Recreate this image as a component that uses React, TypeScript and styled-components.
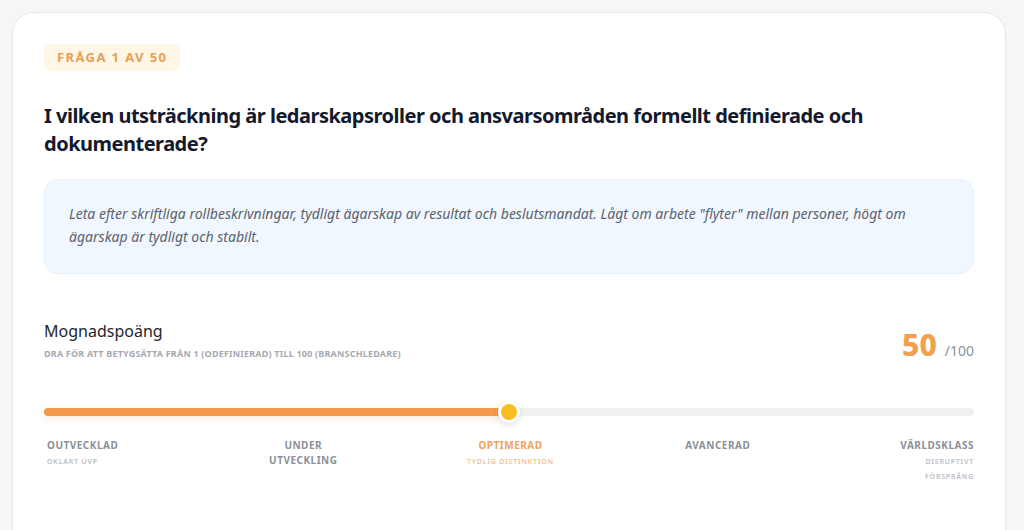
import React, { useState } from 'react';
import styled, { createGlobalStyle } from 'styled-components';

const GlobalStyle = createGlobalStyle`
  html, body {
    margin: 0;
    padding: 0;
    background: #f6f6f7;
    font-family: 'Noto Sans', 'Open Sans', sans-serif;
    -webkit-font-smoothing: antialiased;
  }
`;

const levels = [
  { title: 'Outvecklad', sub: 'Oklart UVP' },
  { title: 'Under utveckling', sub: '' },
  { title: 'Optimerad', sub: 'Tydlig distinktion' },
  { title: 'Avancerad', sub: '' },
  { title: 'Världsklass', sub: 'Disruptivt försprång' },
];

const App: React.FC = () => {
  const [score] = useState(50);
  const active = Math.min(levels.length - 1, Math.floor(score / 20));

  return (
    <>
      <GlobalStyle />
      <Page>
        <Card>
          <Badge>Fråga 1 av 50</Badge>
          <Question>
            I vilken utsträckning är ledarskapsroller och ansvarsområden formellt definierade och
            dokumenterade?
          </Question>

          <Hint>
            Leta efter skriftliga rollbeskrivningar, tydligt ägarskap av resultat och beslutsmandat.
            Lågt om arbete "flyter" mellan personer, högt om ägarskap är tydligt och stabilt.
          </Hint>

          <ScoreHeader>
            <div>
              <ScoreTitle>Mognadspoäng</ScoreTitle>
              <ScoreHelp>Dra för att betygsätta från 1 (odefinierad) till 100 (branschledare)</ScoreHelp>
            </div>
            <ScoreValue>
              <strong>{score}</strong>
              <span>/100</span>
            </ScoreValue>
          </ScoreHeader>

          <Track>
            <Fill style={{ width: `${score}%` }} />
            <Thumb style={{ left: `${score}%` }} />
          </Track>

          <Levels>
            {levels.map((level, i) => (
              <Level key={level.title} index={i}>
                <LevelTitle active={i === active}>{level.title}</LevelTitle>
                {level.sub && <LevelSub active={i === active}>{level.sub}</LevelSub>}
              </Level>
            ))}
          </Levels>
        </Card>
      </Page>
    </>
  );
};

const Page = styled.div`
  padding: 12px 18px 0 12px;
  height: 530px;
  box-sizing: border-box;
  overflow: hidden;
`;

const Card = styled.div`
  background: #ffffff;
  border: 1px solid #e7e7ea;
  border-radius: 22px;
  padding: 31px 31px 60px;
  min-height: 600px;
  box-sizing: border-box;
`;

const Badge = styled.div`
  display: inline-block;
  background: #fff6e5;
  color: #e7a056;
  font-size: 13px;
  font-weight: 700;
  letter-spacing: 1.4px;
  text-transform: uppercase;
  padding: 5px 13px;
  border-radius: 6px;
  line-height: 17px;
`;

const Question = styled.h1`
  margin: 31px 0 0;
  font-size: 20px;
  font-weight: 700;
  line-height: 28px;
  color: #141a2b;
  letter-spacing: -0.5px;
`;

const Hint = styled.div`
  margin-top: 21px;
  background: #f0f7fe;
  border: 1px solid #e6f0fa;
  border-radius: 14px;
  padding: 22px 24px 25px;
  font-size: 14px;
  font-style: italic;
  line-height: 23px;
  color: #5b6270;
`;

const ScoreHeader = styled.div`
  margin-top: 46px;
  display: flex;
  justify-content: space-between;
  align-items: flex-end;
`;

const ScoreTitle = styled.div`
  font-size: 16px;
  color: #22252c;
  line-height: 22px;
`;

const ScoreHelp = styled.div`
  margin-top: 5px;
  font-size: 9px;
  font-weight: 700;
  color: #a6a9b0;
  text-transform: uppercase;
  letter-spacing: 0.2px;
`;

const ScoreValue = styled.div`
  display: flex;
  align-items: baseline;
  gap: 8px;
  margin-bottom: -2px;

  strong {
    font-size: 30px;
    font-weight: 800;
    color: #f0a04e;
    line-height: 34px;
  }

  span {
    font-size: 14px;
    color: #8d929c;
  }
`;

const Track = styled.div`
  position: relative;
  margin-top: 48px;
  height: 8px;
  border-radius: 4px;
  background: #f1f1f2;
`;

const Fill = styled.div`
  height: 100%;
  border-radius: 4px;
  background: #f29a4a;
  box-shadow: 0 2px 8px rgba(242, 154, 74, 0.25);
`;

const Thumb = styled.div`
  position: absolute;
  top: 50%;
  width: 16px;
  height: 16px;
  border-radius: 50%;
  background: #f8bd22;
  border: 3px solid #ffffff;
  box-shadow: 0 2px 6px rgba(0, 0, 0, 0.12);
  transform: translate(-50%, -50%);
`;

const Levels = styled.div`
  margin-top: 22px;
  display: flex;
  justify-content: space-between;
`;

const Level = styled.div<{ index: number }>`
  width: 98px;
  text-align: ${p => (p.index === 0 ? 'left' : p.index === 4 ? 'right' : 'center')};
  padding-left: ${p => (p.index === 0 ? '3px' : '0')};
`;

const LevelTitle = styled.div<{ active: boolean }>`
  font-size: 10px;
  font-weight: 700;
  letter-spacing: 0.5px;
  text-transform: uppercase;
  line-height: 15px;
  color: ${p => (p.active ? '#eea35a' : '#8b9099')};
`;

const LevelSub = styled.div<{ active: boolean }>`
  margin-top: 1px;
  font-size: 7px;
  font-weight: 600;
  letter-spacing: 0.8px;
  text-transform: uppercase;
  line-height: 15px;
  color: ${p => (p.active ? '#f3c08d' : '#b8bcc3')};
`;

export default App;
